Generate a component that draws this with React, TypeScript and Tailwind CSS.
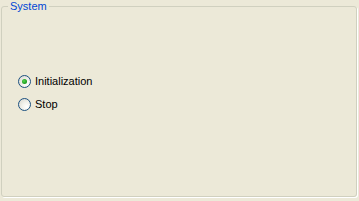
import { useState } from 'react'

function XpRadio({ checked }: { checked: boolean }) {
  return (
    <span className="relative flex h-[13px] w-[13px] shrink-0 items-center justify-center rounded-full border border-[#1c5180] bg-[radial-gradient(circle_at_70%_70%,#ffffff_0%,#f2f2ec_40%,#d6d5cc_100%)]">
      {checked && (
        <span className="h-[5px] w-[5px] rounded-full bg-[radial-gradient(circle_at_40%_40%,#55d551_0%,#21a121_60%,#1a8a1a_100%)]" />
      )}
    </span>
  )
}

export default function App() {
  const [mode, setMode] = useState('init')
  const options = [
    { id: 'init', label: 'Initialization' },
    { id: 'stop', label: 'Stop' },
  ]

  return (
    <div className="h-[201px] w-[359px] bg-[#ece9d8] pl-[1px] font-['Tahoma','Liberation_Sans',sans-serif] text-[11px] text-black">
      <fieldset className="h-[197px] w-[356px] rounded-[3px] border border-[#d0d0bf] shadow-[1px_1px_0_#ffffff]">
        <legend className="ml-[6px] px-[2px] pt-[1px] text-[11px] leading-[11px] text-[#0046d5]">System</legend>
        <div className="flex flex-col gap-[10px] pl-[16px] pt-[63px]">
          {options.map(o => (
            <label key={o.id} className="flex h-[13px] items-center gap-[4px] cursor-default" onClick={() => setMode(o.id)}>
              <XpRadio checked={mode === o.id} />
              <span className="leading-[13px]">{o.label}</span>
            </label>
          ))}
        </div>
      </fieldset>
    </div>
  )
}
